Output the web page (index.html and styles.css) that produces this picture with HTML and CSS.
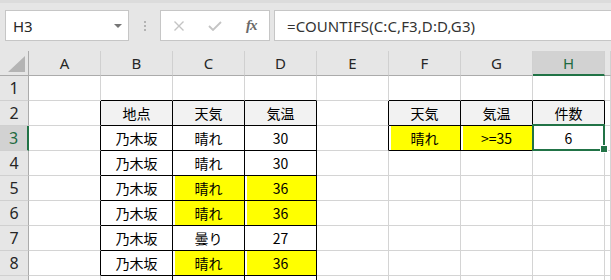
FILE: index.html
```html
<!DOCTYPE html>
<html lang="ja">
<head>
<meta charset="utf-8">
<link rel="stylesheet" href="styles.css">
</head>
<body>
<div class="app">
  <div class="toolbar">
    <div class="namebox"><span class="nb-text">H3</span><span class="nb-arrow"></span></div>
    <div class="dots"><i></i><i></i><i></i></div>
    <div class="fbtns">
      <svg class="ic-x" width="12" height="10" viewBox="0 0 12 10"><path d="M1.5 0.5 L10.5 9.5 M10.5 0.5 L1.5 9.5" stroke="#c4c4c4" stroke-width="1.4" fill="none"/></svg>
      <svg class="ic-ok" width="14" height="10" viewBox="0 0 14 10"><path d="M1 5 L5 9 L13 1" stroke="#c4c4c4" stroke-width="1.8" fill="none"/></svg>
      <span class="fx">fx</span>
    </div>
    <div class="formula">=COUNTIFS(C:C,F3,D:D,G3)</div>
  </div>
  <div class="sheet">
    <div class="corner"><span class="tri"></span></div>
    <div class="ch">A</div><div class="ch">B</div><div class="ch">C</div><div class="ch">D</div><div class="ch">E</div><div class="ch">F</div><div class="ch">G</div><div class="ch ch-sel">H</div><div class="ch"></div>

    <div class="rh">1</div>
    <div class="c"></div><div class="c kb"></div><div class="c kb"></div><div class="c kb"></div><div class="c"></div><div class="c kb"></div><div class="c kb"></div><div class="c kb"></div><div class="c"></div>

    <div class="rh">2</div>
    <div class="c kr"></div><div class="c t hd">地点</div><div class="c t hd">天気</div><div class="c t hd">気温</div><div class="c kr"></div><div class="c t hd">天気</div><div class="c t hd">気温</div><div class="c t hd">件数</div><div class="c"></div>

    <div class="rh rh-sel">3</div>
    <div class="c kr"></div><div class="c t">乃木坂</div><div class="c t">晴れ</div><div class="c t">30</div><div class="c kr"></div><div class="c t y">晴れ</div><div class="c t y">&gt;=35</div><div class="c t sel">6</div><div class="c"></div>

    <div class="rh">4</div>
    <div class="c kr"></div><div class="c t">乃木坂</div><div class="c t">晴れ</div><div class="c t">30</div><div class="c"></div><div class="c"></div><div class="c"></div><div class="c"></div><div class="c"></div>

    <div class="rh">5</div>
    <div class="c kr"></div><div class="c t">乃木坂</div><div class="c t y">晴れ</div><div class="c t y">36</div><div class="c"></div><div class="c"></div><div class="c"></div><div class="c"></div><div class="c"></div>

    <div class="rh">6</div>
    <div class="c kr"></div><div class="c t">乃木坂</div><div class="c t y">晴れ</div><div class="c t y">36</div><div class="c"></div><div class="c"></div><div class="c"></div><div class="c"></div><div class="c"></div>

    <div class="rh">7</div>
    <div class="c kr"></div><div class="c t">乃木坂</div><div class="c t">曇り</div><div class="c t">27</div><div class="c"></div><div class="c"></div><div class="c"></div><div class="c"></div><div class="c"></div>

    <div class="rh">8</div>
    <div class="c kr"></div><div class="c t">乃木坂</div><div class="c t y">晴れ</div><div class="c t y">36</div><div class="c"></div><div class="c"></div><div class="c"></div><div class="c"></div><div class="c"></div>

    <div class="rh"></div>
    <div class="c"></div><div class="c kr"></div><div class="c kr"></div><div class="c kr"></div><div class="c"></div><div class="c"></div><div class="c"></div><div class="c"></div><div class="c"></div>
  </div>
</div>
</body>
</html>
```
FILE: styles.css
```css
* { box-sizing: border-box; }
html, body { margin: 0; padding: 0; }
body { width: 611px; height: 280px; overflow: hidden; background: #fff; font-family: "Noto Sans", "Noto Sans CJK JP", sans-serif; }

.app { width: 611px; height: 280px; overflow: hidden; }

.toolbar {
  height: 51px;
  background: #e6e6e6;
  border-top: 3px solid #dcdcdc;
  padding-top: 7px;
  display: flex;
  align-items: flex-start;
}
.namebox {
  margin-left: 5px;
  width: 124px;
  height: 31px;
  background: #fff;
  border: 1px solid #c6c6c6;
  display: flex;
  align-items: center;
  padding-left: 7px;
  position: relative;
}
.nb-text { font-size: 15px; color: #262626; font-family: "Noto Sans", sans-serif; }
.nb-arrow {
  margin-left: auto;
  margin-right: 6px;
  width: 0; height: 0;
  border-left: 4px solid transparent;
  border-right: 4px solid transparent;
  border-top: 4px solid #767676;
}
.dots {
  width: 31px;
  height: 31px;
  display: flex;
  flex-direction: column;
  align-items: center;
  justify-content: center;
  gap: 2px;
}
.dots i { display: block; width: 2px; height: 2px; background: #b3b3b3; }
.fbtns {
  width: 110px;
  height: 31px;
  background: #fff;
  border: 1px solid #c6c6c6;
  display: flex;
  align-items: center;
  padding-left: 12px;
}
.ic-x { margin-right: 23px; }
.ic-ok { margin-right: 24px; }
.fx { font-family: "Liberation Serif", serif; font-style: italic; font-size: 15px; color: #6a6a6a; font-weight: bold; letter-spacing: -1px; }
.formula {
  margin-left: 4px;
  flex: 1;
  height: 31px;
  background: #fff;
  border: 1px solid #c6c6c6;
  border-right: none;
  display: flex;
  align-items: center;
  padding-left: 12px;
  font-size: 15px;
  letter-spacing: 0.1px;
  color: #333;
  font-family: "Noto Sans", sans-serif;
}

.sheet {
  display: grid;
  grid-template-columns: 29px repeat(8, 72px) 6px;
  grid-template-rows: 25px;
  grid-auto-rows: 25px;
}
.corner {
  background: #e6e6e6;
  border-right: 1px solid #ababab;
  border-bottom: 1px solid #ababab;
  position: relative;
}
.tri {
  position: absolute;
  right: 3px;
  bottom: 3px;
  width: 0; height: 0;
  border-left: 17px solid transparent;
  border-bottom: 16px solid #b4b4b4;
}
.ch {
  background: #e6e6e6;
  border-bottom: 1px solid #ababab;
  border-right: 1px solid #d0d0d0;
  display: flex;
  align-items: center;
  justify-content: center;
  font-size: 15px;
  color: #262626;
}
.ch-sel {
  background: #d2d2d2;
  border-bottom: 2px solid #217346;
  color: #1e6b41;
}
.rh {
  background: #e6e6e6;
  border-right: 1px solid #ababab;
  border-bottom: 1px solid #d0d0d0;
  display: flex;
  align-items: center;
  justify-content: center;
  font-size: 16px;
  color: #262626;
}
.rh-sel {
  background: #d2d2d2;
  border-right: 2px solid #217346;
  color: #1e6b41;
}
.c {
  border-right: 1px solid #d4d4d4;
  border-bottom: 1px solid #d4d4d4;
  font-family: "Noto Sans CJK JP", sans-serif;
  font-size: 14px;
  color: #000;
  display: flex;
  align-items: center;
  justify-content: center;
  background: #fff;
}
.kb { border-bottom-color: #000; }
.kr { border-right-color: #000; }
.t { border-right-color: #000; border-bottom-color: #000; }
.hd { background: #f2f2f2; }
.y { background: #ffff00; box-shadow: inset 2px 0 0 #fff; }
.sel { position: relative; }
.sel::after {
  content: "";
  position: absolute;
  top: -2px; left: -1px; right: -1px; bottom: -1px;
  border: 2px solid #217346;
  z-index: 2;
}
.sel::before {
  content: "";
  position: absolute;
  right: -4px; bottom: -3px;
  width: 6px; height: 6px;
  background: #217346;
  border: 1px solid #fff;
  z-index: 3;
}
```
